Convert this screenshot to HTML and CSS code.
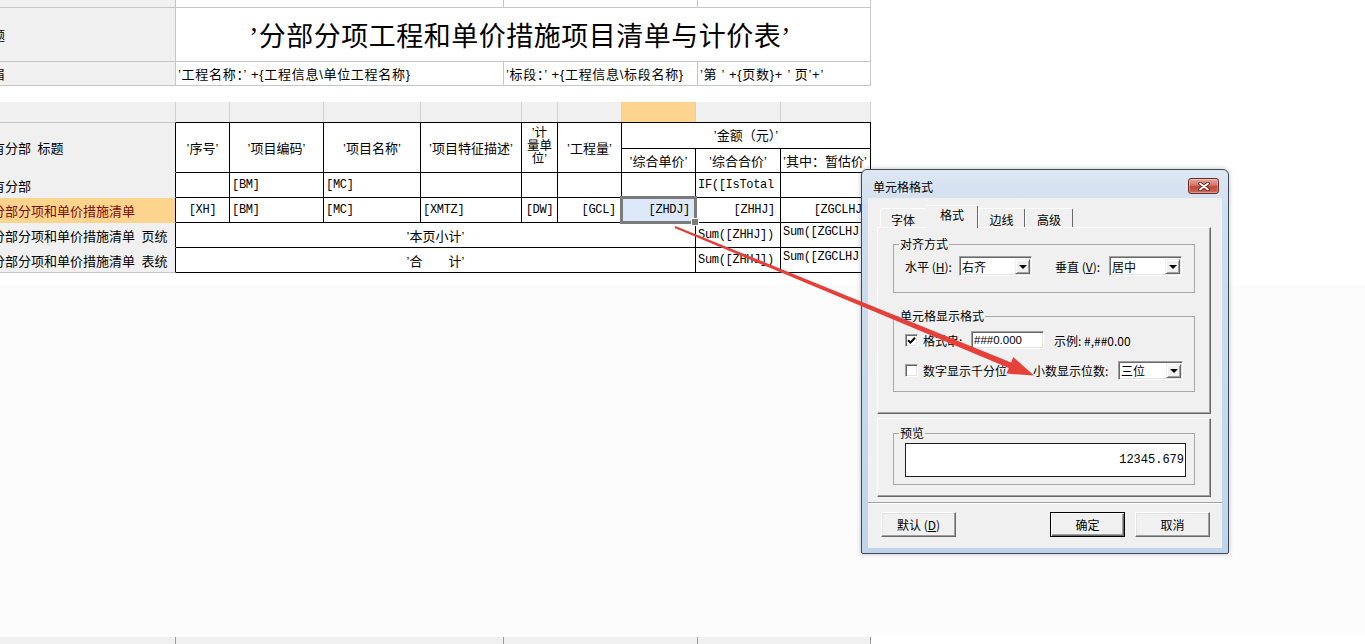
FILE: index.html
```html
<!DOCTYPE html>
<html lang="zh-CN">
<head>
<meta charset="utf-8">
<title>单元格格式</title>
<link rel="stylesheet" href="styles.css">
</head>
<body>
<div class="page">
  <div class="sheet">
    <div class="top">
      <div class="lab"></div>
      <div></div>
      <div></div>
      <div></div>
      <div class="lab"><span>标题</span></div>
      <div class="title">’分部分项工程和单价措施项目清单与计价表’</div>
      <div class="lab"><span>页眉</span></div>
      <div class="info">’工程名称：’ +{工程信息\单位工程名称}</div>
      <div class="info">’标段：’ +{工程信息\标段名称}</div>
      <div class="info">’第 ’ +{页数}+ ’ 页’+’</div>
    </div>
    <div class="blank"></div>
    <div class="colhead">
      <div></div><div></div><div></div><div></div><div></div>
      <div></div><div></div><div class="hot"></div><div></div><div></div>
    </div>
    <div class="tbl">
      <div class="lab bt h2"><span>所有分部 标题</span></div>
      <div class="c bt h2">’序号’</div>
      <div class="c bt h2">’项目编码’</div>
      <div class="c bt h2">’项目名称’</div>
      <div class="c bt h2">’项目特征描述’</div>
      <div class="c bt h2 unit">’计<br>量单<br>位’</div>
      <div class="c bt h2">’工程量’</div>
      <div class="c bt amt">’金额（元）’</div>
      <div class="c">’综合单价’</div>
      <div class="c">’综合合价’</div>
      <div class="l">’其中：暂估价’</div>

      <div class="lab"><span>所有分部</span></div>
      <div></div>
      <div class="l mono">[BM]</div>
      <div class="l mono">[MC]</div>
      <div></div>
      <div></div>
      <div></div>
      <div></div>
      <div class="l mono">IF([IsTotal</div>
      <div></div>

      <div class="lab hot red"><span>各分部分项和单价措施清单</span></div>
      <div class="c mono">[XH]</div>
      <div class="l mono">[BM]</div>
      <div class="l mono">[MC]</div>
      <div class="l mono">[XMTZ]</div>
      <div class="c mono">[DW]</div>
      <div class="r mono">[GCL]</div>
      <div class="r mono cur">[ZHDJ]</div>
      <div class="r mono">[ZHHJ]</div>
      <div class="r mono rr">[ZGCLHJ</div>

      <div class="lab"><span>各分部分项和单价措施清单 页统</span></div>
      <div class="c merged">’本页小计’</div>
      <div class="l mono">Sum([ZHHJ])</div>
      <div class="l mono hi">Sum([ZGCLHJ</div>

      <div class="lab bb"><span>各分部分项和单价措施清单 表统</span></div>
      <div class="c merged">’合　　计’</div>
      <div class="l mono">Sum([ZHHJ])</div>
      <div class="l mono hi">Sum([ZGCLHJ</div>
    </div>
  </div>
  <div class="rest"></div>
  <div class="strip">
    <div></div><div></div><div></div><div></div>
  </div>

  <div class="dialog">
    <div class="titlebar">
      <span class="ttl">单元格格式</span>
      <span class="close"><svg width="12" height="9" viewBox="0 0 12 9"><path d="M2 1.5 L10 7.5 M10 1.5 L2 7.5" stroke="#5b1d17" stroke-width="3.6" stroke-linecap="round"/><path d="M2 1.5 L10 7.5 M10 1.5 L2 7.5" stroke="#fff" stroke-width="2" stroke-linecap="round"/></svg></span>
    </div>
    <div class="client">
      <div class="tabarea">
        <div class="tabs">
          <div class="tab w1">字体</div>
          <div class="tab sel">格式</div>
          <div class="tab w3">边线</div>
          <div class="tab w4">高级</div>
        </div>
        <div class="panel">
          <fieldset class="grp g1">
            <legend>对齐方式</legend>
            <div class="row">
              <span class="lbl">水平 (<u>H</u>):</span>
              <div class="combo cw"><span>右齐</span><i class="dd"></i></div>
              <span class="lbl lbl2">垂直 (<u>V</u>):</span>
              <div class="combo cw"><span>居中</span><i class="dd"></i></div>
            </div>
          </fieldset>
          <fieldset class="grp g2">
            <legend>单元格显示格式</legend>
            <div class="row r1">
              <span class="chk"><svg width="9" height="9" viewBox="0 0 9 9"><path d="M1 4.2 L3.4 6.6 L8 1.8" fill="none" stroke="#000" stroke-width="2"/></svg></span>
              <span class="fmtl">格式串:</span>
              <div class="input">###0.000</div>
              <span class="ex">示例: #,##0.00</span>
            </div>
            <div class="row r2">
              <span class="chk"></span>
              <span class="fmtl2">数字显示千分位</span>
              <span class="dec">小数显示位数:</span>
              <div class="combo cw2"><span>三位</span><i class="dd"></i></div>
            </div>
          </fieldset>
        </div>
        <div class="panel panel2">
          <fieldset class="grp g3">
            <legend>预览</legend>
            <div class="preview">12345.679</div>
          </fieldset>
        </div>
      </div>
      <div class="sep"></div>
      <div class="btns">
        <button class="btn">默认 (<u>D</u>)</button>
        <button class="btn def">确定</button>
        <button class="btn">取消</button>
      </div>
    </div>
  </div>

  <svg class="arrow" width="1365" height="644" viewBox="0 0 1365 644">
    <polygon points="675.4,226.1 1011.1,362.5 1013.3,357.0 1034,375.5 1006.5,373.6 1008.8,368.1 674.6,227.9" fill="#e5403a"/>
  </svg>
</div>
</body>
</html>
```

FILE: styles.css
```css
* { box-sizing: border-box; }
html, body { margin: 0; padding: 0; }
body {
  width: 1365px;
  height: 644px;
  overflow: hidden;
  background: #fcfcfc;
  font-family: "Liberation Sans", "Noto Sans CJK SC", sans-serif;
  font-size: 13px;
  color: #000;
}
.page {
  position: relative;
  height: 644px;
  display: flex;
  flex-direction: column;
}
.sheet { height: 285px; background: #fff; flex: none; }

/* top rows */
.top {
  display: grid;
  grid-template-columns: 176px 328px 194px 173px;
  grid-template-rows: 8px 54px 24px;
  width: 871px;
}
.top > div {
  border-right: 1px solid #c6c6c6;
  border-bottom: 1px solid #c6c6c6;
}
.lab {
  background: #f0f0f0;
  display: flex;
  align-items: center;
  overflow: hidden;
  white-space: nowrap;
}
.lab span { margin-left: -21px; flex: none; word-spacing: 3px; }
.title {
  grid-column: 2 / 5;
  display: flex;
  align-items: center;
  justify-content: center;
  font-family: "Liberation Serif", "Noto Sans CJK SC", serif;
  font-size: 27px;
  letter-spacing: 0.5px;
  padding-right: 6px;
}
.info {
  display: flex;
  align-items: center;
  padding-left: 2px;
  overflow: hidden;
  white-space: nowrap;
  letter-spacing: 0.7px;
}
.blank { height: 16px; }

/* column header strip */
.colhead {
  display: grid;
  grid-template-columns: 176px 54px 94px 97px 101px 36px 64px 74px 85px 90px;
  height: 20px;
  width: 871px;
}
.colhead > div { background: #f0f0f0; border-right: 1px solid #d0d0d0; }
.colhead > .hot { background: #fdd48d; }

/* table */
.tbl {
  display: grid;
  grid-template-columns: 176px 54px 94px 97px 101px 36px 64px 74px 85px 90px;
  grid-template-rows: 27px 24px 25px 25px 25px 25px;
  width: 871px;
}
.tbl > div {
  border-right: 1px solid #000;
  border-bottom: 1px solid #000;
  display: flex;
  align-items: center;
  overflow: hidden;
  white-space: nowrap;
}
.tbl > .lab { border-bottom-color: transparent; }
.tbl > .bt { border-top: 1px solid #000; }
.tbl > .lab.bt { border-top-color: #c6c6c6; }
.tbl > .lab.bb { border-bottom-color: #c6c6c6; }
.tbl > .hot { background: #fdd48d; }
.red { color: #7d0b0b; }
.h2 { grid-row: 1 / 3; }
.amt { grid-row: 1; grid-column: 8 / 11; padding-bottom: 2px; }
.merged { grid-column: 2 / 9; }
.c { justify-content: center; }
.l { justify-content: flex-start; padding-left: 2px; }
.r { justify-content: flex-end; padding-right: 5px; }
.rr { padding-right: 8px; }
.hi { align-items: flex-start !important; padding-top: 2px; }
.unit { line-height: 13px; text-align: center; font-size: 12.5px; padding-bottom: 2px; }
.mono { font-family: "Liberation Mono", monospace; font-size: 12px; letter-spacing: -0.3px; }
.tbl > .cur {
  position: relative;
  overflow: visible;
  background: #dce8f8;
  z-index: 2;
}
.cur::after {
  content: "";
  position: absolute;
  left: -2px; top: -2px; right: -2px; bottom: -2px;
  border: 3px solid #7b7b7b;
}
.cur::before {
  content: "";
  position: absolute;
  right: -4px; bottom: -4px;
  width: 6px; height: 6px;
  background: #7b7b7b;
  border: 1px solid #fff;
  z-index: 3;
}

.rest { flex: 1; background: #fcfcfc; }
.strip {
  height: 8px;
  flex: none;
  display: flex;
  border-top: 1px solid #fff;
  background: #fff;
}
.strip > div { background: #f0f0f0; border-right: 1px solid #9a9a9a; }
.strip > div:nth-child(1) { width: 176px; }
.strip > div:nth-child(2) { width: 328px; }
.strip > div:nth-child(3) { width: 194px; }
.strip > div:nth-child(4) { width: 173px; }

/* dialog */
.dialog {
  position: absolute;
  left: 861px;
  top: 169px;
  width: 368px;
  height: 385px;
  border: 1px solid #3d4856;
  border-radius: 6px 6px 2px 2px;
  background: linear-gradient(#dde7f3, #cfdef0 40px, #bfd4ec);
  padding: 0 6px 5px;
  display: flex;
  flex-direction: column;
  font-family: "Noto Sans CJK SC", "Liberation Sans", sans-serif;
  font-size: 12px;
  z-index: 5;
  box-shadow: 0 0 5px rgba(0,0,0,.25);
}
.titlebar { height: 28px; flex: none; display: flex; align-items: flex-start; }
.ttl { margin: 9px 0 0 5px; line-height: 16px; }
.close {
  margin: 8px 3px 0 auto;
  width: 31px;
  height: 16px;
  border: 1px solid #6b2b24;
  border-radius: 3px;
  background: linear-gradient(#e4a89e, #d27468 45%, #c1463a 55%, #cf6a58);
  display: flex;
  align-items: center;
  justify-content: center;
  box-shadow: inset 0 0 0 1px rgba(255,255,255,.3);
}
.client {
  height: 350px;
  flex: none;
  background: #f0f0f0;
  display: flex;
  flex-direction: column;
}
.tabarea { padding: 7px 11px 0 9px; }
.tabs { display: flex; align-items: flex-end; height: 22px; padding-left: 3px; }
.tab {
  height: 19px;
  border: 1px solid #fff;
  border-bottom: none;
  border-right-color: #696969;
  border-radius: 2px 2px 0 0;
  display: flex;
  justify-content: center;
  align-items: center;
  padding-top: 3px;
  background: #f0f0f0;
}
.tab.w1 { width: 46px; border-right-color: transparent; }
.tab.w3 { width: 47px; }
.tab.w4 { width: 48px; }
.tab.sel {
  width: 52px;
  height: 23px;
  margin-bottom: -1px;
  position: relative;
  z-index: 1;
  padding-top: 0;
  padding-bottom: 5px;
  border-left-color: #f0f0f0;
}
.panel {
  height: 187px;
  border: 1px solid #fff;
  border-right-color: #696969;
  border-bottom-color: #696969;
  box-shadow: inset -1px -1px 0 #a0a0a0;
  padding-top: 9px;
}
.grp {
  margin: 0 0 0 15px;
  width: 302px;
  min-width: 0;
  border: 1px solid #a8a8a8;
  padding: 0;
}
.grp legend {
  margin-left: 5px;
  padding: 0 1px;
  line-height: 14px;
  font-size: 12px;
}
.g1 { padding: 5px 0 16px; }
.g2 { margin-top: 16px; padding: 8px 0 11px; }
.row { display: flex; align-items: center; margin-left: 11px; }
.g1 .row { height: 20px; }
.lbl { width: 54px; }
.lbl2 { margin-left: 23px; }
.combo {
  height: 20px;
  background: #fff;
  border: 1px solid;
  border-color: #a0a0a0 #fff #fff #a0a0a0;
  box-shadow: inset 1px 1px 0 #696969, inset -1px -1px 0 #e3e3e3;
  display: flex;
  align-items: center;
  padding: 1px 1px 1px 2px;
}
.cw { width: 73px; }
.cw2 { width: 65px; height: 19px; }
.dd {
  margin-left: auto;
  width: 15px;
  height: 15px;
  background: #f0f0f0;
  border: 1px solid;
  border-color: #f0f0f0 #696969 #696969 #f0f0f0;
  box-shadow: inset 1px 1px 0 #fff, inset -1px -1px 0 #a0a0a0;
  display: flex;
  align-items: center;
  justify-content: center;
}
.cw2 .dd { height: 14px; }
.dd::after {
  content: "";
  border-left: 4px solid transparent;
  border-right: 4px solid transparent;
  border-top: 4px solid #000;
  margin-top: 1px;
}
.r1 { height: 18px; }
.r2 { height: 19px; margin-top: 12px; }
.chk {
  width: 13px;
  height: 13px;
  background: #fff;
  border: 1px solid;
  border-color: #a0a0a0 #fff #fff #a0a0a0;
  box-shadow: inset 1px 1px 0 #696969, inset -1px -1px 0 #e3e3e3;
  display: flex;
  align-items: center;
  justify-content: center;
  flex: none;
}
.fmtl { margin-left: 5px; width: 48px; }
.fmtl2 { margin-left: 5px; width: 84px; }
.input {
  width: 73px;
  height: 18px;
  background: #fff;
  border: 1px solid;
  border-color: #a0a0a0 #fff #fff #a0a0a0;
  box-shadow: inset 1px 1px 0 #696969, inset -1px -1px 0 #e3e3e3;
  display: flex;
  align-items: center;
  padding-left: 2px;
  font-family: "Liberation Sans", sans-serif;
  font-size: 11.5px;
}
.ex { margin-left: 10px; }
.dec { margin-left: 26px; width: 85px; }
.panel2 { height: 79px; margin-top: 4px; padding-top: 7px; }
.g3 { padding: 3px 0 7px; }
.preview {
  margin-left: 11px;
  width: 281px;
  height: 34px;
  background: #fff;
  border: 1px solid #1e1e1e;
  display: flex;
  align-items: center;
  justify-content: flex-end;
  padding-right: 1px;
  font-family: "Liberation Mono", monospace;
  font-size: 12px;
}
.sep {
  margin-top: 5px;
  height: 2px;
  border-top: 1px solid #a0a0a0;
  border-bottom: 1px solid #fff;
}
.btns { display: flex; padding: 0 12px 0 13px; margin-top: 8px; }
.btn {
  width: 75px;
  height: 25px;
  font: inherit;
  color: #000;
  background: #f0f0f0;
  border: 1px solid;
  border-color: #fff #696969 #696969 #fff;
  box-shadow: inset -1px -1px 0 #a0a0a0, inset 1px 1px 0 #e3e3e3;
  padding: 0;
}
.btn.def {
  margin-left: auto;
  margin-right: 10px;
  border: 1px solid #000;
  box-shadow: inset 1px 1px 0 #fff, inset -1px -1px 0 #696969, inset -2px -2px 0 #a0a0a0;
}
.arrow {
  position: absolute;
  left: 0;
  top: 0;
  z-index: 10;
  pointer-events: none;
}
```
